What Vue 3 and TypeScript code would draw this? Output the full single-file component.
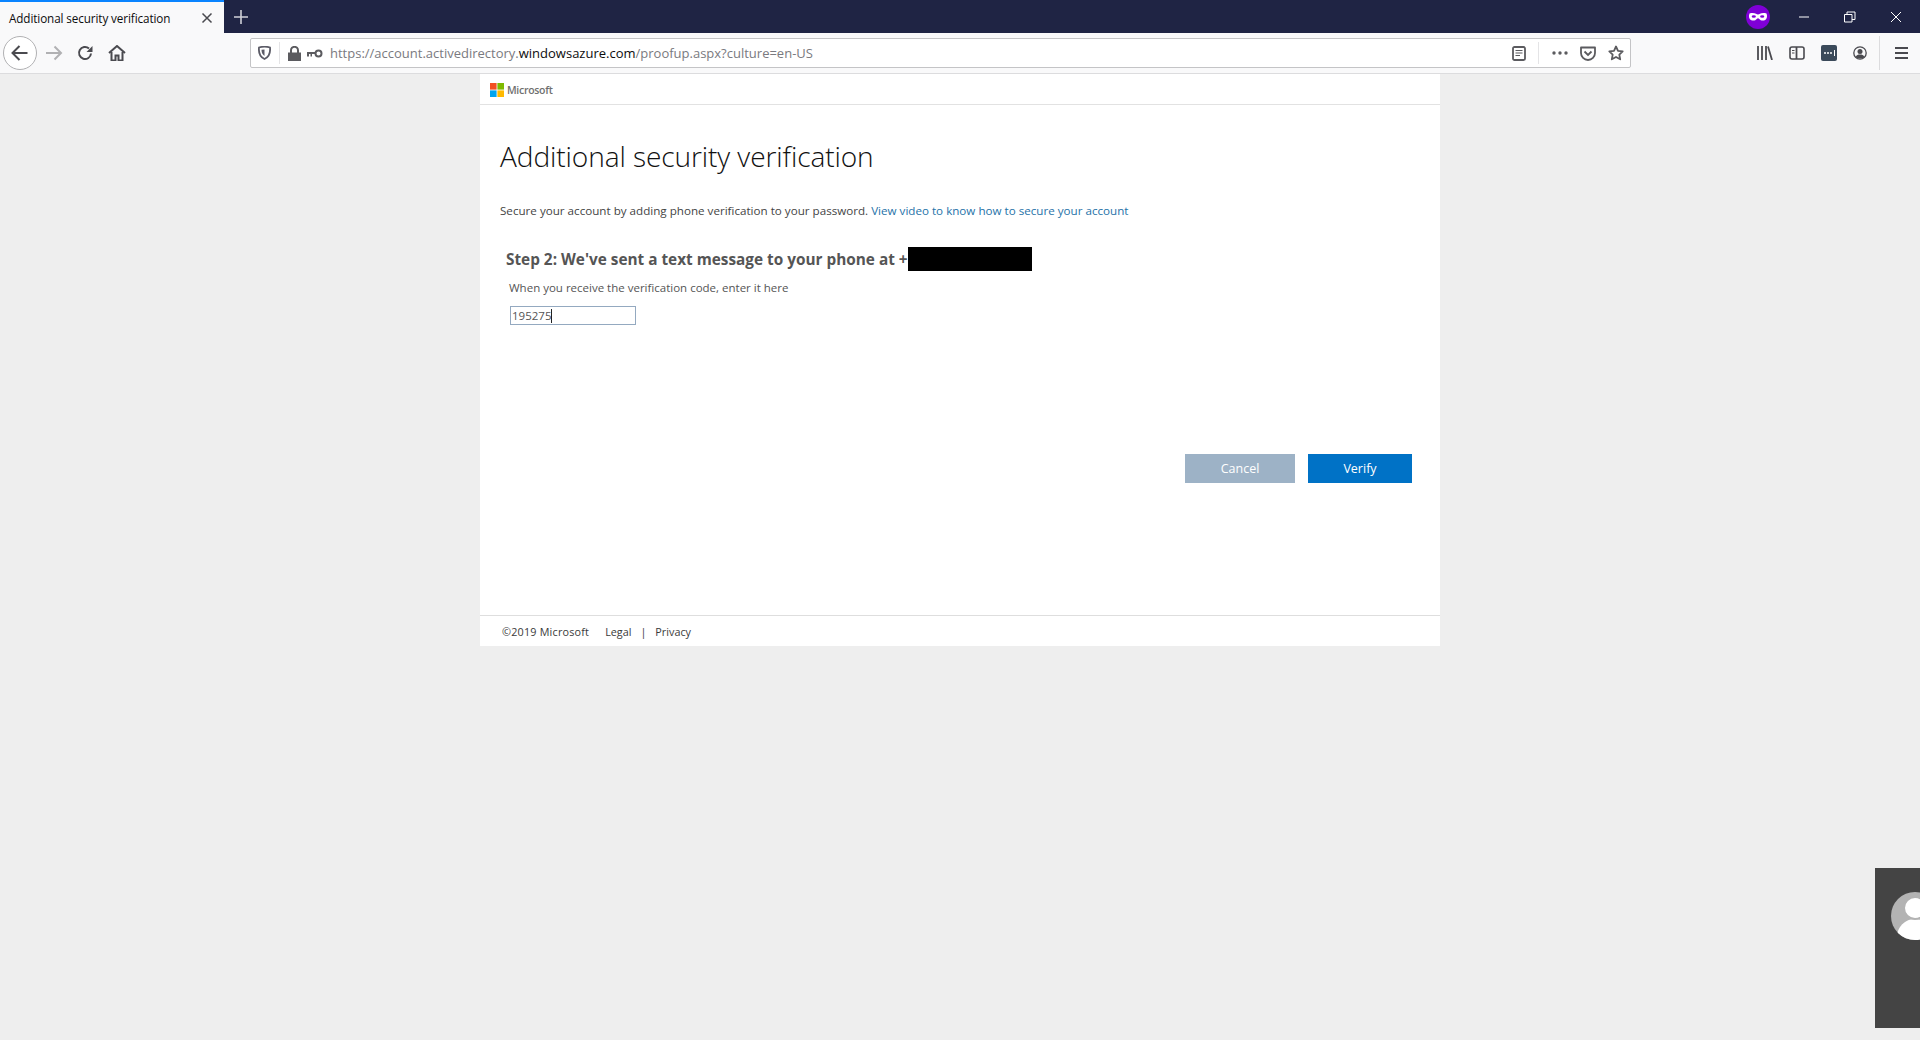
<script setup lang="ts">
const title: string = 'Additional security verification'
</script>

<template>
  <div class="browser">
    <div class="tabbar">
      <div class="tab">
        <span class="tab-title">{{ title }}</span>
        <svg class="tab-close" width="12" height="12" viewBox="0 0 12 12"><path d="M1.5 1.5l9 9M10.5 1.5l-9 9" stroke="#4a4a4f" stroke-width="1.5" fill="none"/></svg>
      </div>
      <svg class="newtab" width="14" height="14" viewBox="0 0 14 14"><path d="M7 0v14M0 7h14" stroke="#cfd0d8" stroke-width="1.6" fill="none"/></svg>
      <div class="spacer"></div>
      <svg class="mask" width="24" height="24" viewBox="0 0 24 24">
        <circle cx="12" cy="12" r="12" fill="#7f00d6"/>
        <path d="M3.500 8.500c2.500-.8 5-.6 6.500.3 1.300.8 2.700.8 4 0 1.500-.9 4-1.100 6.500-.3.700 1.800.800 4-.3 5.500-1.200 1.700-3.700 2-5.500 1.200-1.300-.6-1.800-1.900-2.700-1.900s-1.400 1.300-2.700 1.900C7.500 16 5 15.700 3.800 14 2.700 12.500 2.800 10.300 3.500 8.500z" fill="#fff"/>
        <ellipse cx="7.800" cy="11.500" rx="2.100" ry="1.200" fill="#7f00d6"/>
        <ellipse cx="16.200" cy="11.500" rx="2.100" ry="1.200" fill="#7f00d6"/>
      </svg>
      <div class="win-btns">
        <svg width="12" height="12" viewBox="0 0 12 12"><path d="M1 6h10" stroke="#fff" fill="none"/></svg>
        <svg width="12" height="12" viewBox="0 0 12 12"><path d="M.5 3.500h7.500v7.500H.5zM3 3.500V1h8v7.500H8" stroke="#fff" fill="none"/></svg>
        <svg width="12" height="12" viewBox="0 0 12 12"><path d="M1 1l10 10M11 1L1 11" stroke="#fff" fill="none"/></svg>
      </div>
    </div>

    <div class="toolbar">
      <button class="back" type="button">
        <svg width="18" height="18" viewBox="0 0 18 18"><path d="M1.500 9h15M8.500 2L1.500 9l7 7" stroke="#4a4a4f" stroke-width="2" fill="none"/></svg>
      </button>
      <svg class="forward" width="18" height="16" viewBox="0 0 18 16"><path d="M1 8h15M9.500 1.500L16 8l-6.500 6.500" stroke="#b1b1b3" stroke-width="2" fill="none"/></svg>
      <svg class="reload" width="16" height="16" viewBox="0 0 16 16"><path d="M14 8.500A6 6 0 1 1 12 3.500" stroke="#4a4a4f" stroke-width="2" fill="none"/><path d="M15.500 1v6h-6z" fill="#4a4a4f"/></svg>
      <svg class="home" width="18" height="16" viewBox="0 0 18 16"><path d="M1 8l8-7 8 7" stroke="#4a4a4f" stroke-width="2" fill="none"/><path d="M3.500 7v8.500h4v-5h3v5h4V7" stroke="#4a4a4f" stroke-width="2" fill="none"/></svg>

      <div class="urlbar">
        <svg class="shield" width="13" height="14" viewBox="0 0 13 14"><path d="M1 1.500c3.500-1 7.500-1 11 0 .5 5-1 9.500-5.500 11.500C2 11 .5 6.500 1 1.500z" stroke="#5b5b66" stroke-width="1.800" fill="none"/><path d="M6.500 3.500v6.500c-2-1.200-3-3.500-3-6.200z" fill="#5b5b66"/></svg>
        <span class="url-sep"></span>
        <svg class="lock" width="13" height="15" viewBox="0 0 13 15"><path d="M0 6.500h13V15H0z" fill="#5b5b5f"/><path d="M3 7V4.300a3.500 3.500 0 0 1 7 0V7" stroke="#5b5b5f" stroke-width="2" fill="none"/></svg>
        <svg class="key" width="16" height="9" viewBox="0 0 16 9"><circle cx="11.500" cy="4.500" r="3" stroke="#5b5b5f" stroke-width="2" fill="none"/><path d="M0 3h8v2H5v2.500H3.500V5H2v2.500H0z" fill="#5b5b5f"/></svg>
        <span class="url"><span class="dim">https://account.activedirectory.</span><span class="host">windowsazure.com</span><span class="dim">/proofup.aspx?culture=en-US</span></span>
        <div class="spacer"></div>
        <svg class="reader" width="14" height="15" viewBox="0 0 14 15"><rect x="1" y="1" width="12" height="13" rx="1.500" stroke="#5b5b5f" stroke-width="1.800" fill="none"/><path d="M3.500 4.500h7M3.500 7h7M3.500 9.500h4.500" stroke="#5b5b5f" stroke-width="1.200" fill="none"/></svg>
        <span class="url-sep sep2"></span>
        <svg class="dots" width="16" height="4" viewBox="0 0 16 4"><circle cx="2" cy="2" r="1.700" fill="#5b5b5f"/><circle cx="8" cy="2" r="1.700" fill="#5b5b5f"/><circle cx="14" cy="2" r="1.700" fill="#5b5b5f"/></svg>
        <svg class="pocket" width="16" height="15" viewBox="0 0 16 15"><path d="M1 1.500h14v5.500a7 7 0 0 1-14 0z" stroke="#5b5b5f" stroke-width="1.800" fill="none" stroke-linejoin="round"/><path d="M4.500 5.500L8 9l3.500-3.500" stroke="#5b5b5f" stroke-width="1.800" fill="none"/></svg>
        <svg class="star" width="16" height="16" viewBox="0 0 16 16"><path d="M8 1.500l2 4.300 4.700.6-3.400 3.200.9 4.700L8 12l-4.200 2.300.9-4.700L1.300 6.400 6 5.800z" stroke="#5b5b5f" stroke-width="1.800" fill="none" stroke-linejoin="round"/></svg>
      </div>

      <div class="spacer"></div>
      <div class="tool-icons">
        <svg width="16" height="14" viewBox="0 0 16 14"><path d="M1 0v14M5 0v14M9 0v14M11 .5l4 13.500" stroke="#4a4a4f" stroke-width="1.800" fill="none"/></svg>
        <svg width="16" height="14" viewBox="0 0 16 14"><rect x="1" y="1" width="14" height="12" rx="2" stroke="#4a4a4f" stroke-width="1.600" fill="none"/><path d="M7.500 1v12" stroke="#4a4a4f" stroke-width="1.800"/><path d="M3 4.500h2.500M3 7h2.500" stroke="#4a4a4f" stroke-width="1.200"/></svg>
        <span class="bw"><i></i><i></i><i></i><b></b></span>
        <svg width="14" height="14" viewBox="0 0 14 14"><circle cx="7" cy="7" r="6.200" stroke="#4a4a4f" stroke-width="1.300" fill="none"/><circle cx="7" cy="5.500" r="2.500" fill="#4a4a4f"/><path d="M2.500 11c1-2 2.500-2.500 4.500-2.500s3.500.5 4.500 2.500C10 13 4 13 2.500 11z" fill="#4a4a4f"/></svg>
      </div>
      <span class="tool-sep"></span>
      <svg class="menu" width="13" height="12" viewBox="0 0 13 12"><path d="M0 1h13M0 6h13M0 11h13" stroke="#4a4a4f" stroke-width="1.800" fill="none"/></svg>
    </div>

    <div class="viewport">
      <main class="page">
        <header class="brand">
          <svg width="14" height="14" viewBox="0 0 14 14"><rect width="6.600" height="6.600" fill="#f25022"/><rect x="7.400" width="6.600" height="6.600" fill="#7fba00"/><rect y="7.400" width="6.600" height="6.600" fill="#00a4ef"/><rect x="7.400" y="7.400" width="6.600" height="6.600" fill="#ffb900"/></svg>
          <span>Microsoft</span>
        </header>
        <section class="content">
          <h1>{{ title }}</h1>
          <p class="intro">Secure your account by adding phone verification to your password. <a href="#">View video to know how to secure your account</a></p>
          <div class="step">
            <h2>Step 2: We've sent a text message to your phone at +<span class="redact"></span></h2>
            <p class="hint">When you receive the verification code, enter it here</p>
            <div class="field">195275<span class="caret"></span></div>
          </div>
          <div class="actions">
            <button class="btn cancel" type="button">Cancel</button>
            <button class="btn verify" type="button">Verify</button>
          </div>
        </section>
        <footer class="foot">
          <span class="copy">©2019 Microsoft</span>
          <span>Legal</span>
          <span class="bar">|</span>
          <span>Privacy</span>
        </footer>
      </main>
      <aside class="widget">
        <svg width="45" height="48" viewBox="0 0 45 48">
          <defs><clipPath id="avatar-clip"><circle cx="40" cy="24" r="24"/></clipPath></defs>
          <g clip-path="url(#avatar-clip)">
            <rect width="45" height="48" fill="#b3b3b3"/>
            <ellipse cx="40" cy="45" rx="18" ry="18" fill="#fff"/>
            <circle cx="40" cy="16" r="11" fill="#fff" stroke="#b3b3b3" stroke-width="2"/>
          </g>
        </svg>
      </aside>
    </div>
  </div>
</template>

<style>
html, body { margin: 0; background: #eeeeee; }
</style>

<style scoped>
.browser { width: 1920px; height: 1040px; overflow: hidden; display: flex; flex-direction: column; font-family: "Open Sans", "Noto Sans", sans-serif; position: relative; }
.spacer { flex: 1; }

.tabbar { height: 33px; background: #1f2444; display: flex; align-items: center; flex: none; }
.tab { width: 224px; height: 33px; box-sizing: border-box; border-top: 2px solid #0a84ff; background: #f9f9fa; display: flex; align-items: center; padding: 0 11px 0 9px; justify-content: space-between; }
.tab-title { font-size: 11.700px; color: #0c0c0d; white-space: nowrap; letter-spacing: -0.1px; }
.newtab { margin-left: 10px; }
.mask { margin-right: 28px; }
.win-btns { display: flex; align-items: center; gap: 34px; margin-right: 18px; }

.toolbar { height: 41px; box-sizing: border-box; background: #f9f9fa; border-bottom: 1px solid #dcdcde; display: flex; align-items: center; padding-left: 3px; flex: none; }
.back { width: 34px; height: 34px; border-radius: 50%; border: 1px solid #b1b1b3; background: #fff; padding: 0; display: flex; align-items: center; justify-content: center; }
.forward { margin-left: 8px; }
.reload { margin-left: 14px; }
.home { margin-left: 15px; }

.urlbar { width: 1381px; height: 30px; box-sizing: border-box; margin-left: 124px; border: 1px solid #c4c4c6; border-radius: 2px; background: #fff; display: flex; align-items: center; padding-left: 7px; flex: none; }
.url-sep { width: 1px; height: 22px; background: #e4e4e6; margin: 0 8px 0 8px; }
.sep2 { margin: 0 13px 0 12px; }
.lock { margin-left: 0; }
.key { margin-left: 6px; }
.url { margin-left: 7px; font-size: 13px; white-space: nowrap; }
.dim { color: #7a7a80; }
.host { color: #0c0c0d; }
.dots { margin-right: 12px; }
.pocket { margin-right: 12px; }
.star { margin-right: 6px; }

.tool-icons { display: flex; align-items: center; gap: 16px; }
.bw { width: 16px; height: 16px; border-radius: 2px; background: #3b4a5a; display: flex; align-items: center; justify-content: center; gap: 1px; }
.bw i { width: 2px; height: 2px; border-radius: 50%; background: #fff; }
.bw b { width: 1px; height: 6px; background: #fff; margin-left: 1px; }
.tool-sep { width: 1px; height: 34px; background: #dcdcde; margin: 0 15px 0 12px; }
.menu { margin-right: 12px; }

.viewport { flex: 1; background: #eeeeee; display: flex; justify-content: center; align-items: flex-start; }
.page { width: 960px; height: 572px; background: #fff; display: flex; flex-direction: column; }
.brand { height: 31px; box-sizing: border-box; padding-top: 2px; border-bottom: 1px solid #e2e2e2; display: flex; align-items: center; gap: 3px; padding-left: 10px; font-size: 10.500px; color: #6f6f6f; flex: none; font-weight: 600; letter-spacing: -0.3px; }
.content { flex: 1; padding: 0 28px 0 20px; display: flex; flex-direction: column; }
h1 { margin: 32px 0 0; font-family: "Open Sans", sans-serif; font-weight: 300; font-size: 28.100px; line-height: 38px; color: #111; white-space: nowrap; letter-spacing: -0.1px; }
.intro { margin: 28px 0 0; font-size: 11.640px; line-height: 16px; color: #444; white-space: nowrap; }
.intro a { color: #2672a8; text-decoration: none; }
.step { padding-left: 6px; }
h2 { margin: 28px 0 0; height: 24px; font-size: 15.350px; line-height: 24px; font-weight: 700; color: #555; white-space: nowrap; display: flex; }
.redact { width: 124px; height: 24px; background: #000; margin-left: 0; }
.hint { margin: 9px 0 0 3px; font-size: 11.500px; line-height: 16px; color: #555; white-space: nowrap; }
.field { margin: 10px 0 0 4px; width: 126px; height: 19px; box-sizing: border-box; border: 1px solid #94a9c0; font-size: 11.500px; line-height: 17px; padding-left: 1px; color: #555; display: flex; align-items: center; }
.caret { width: 1px; height: 14px; background: #222; }
.actions { margin-top: 129px; display: flex; justify-content: flex-end; gap: 13px; }
.btn { height: 29px; border: none; padding: 0; color: #fff; font-family: inherit; font-size: 12.500px; }
.cancel { width: 110px; background: #9db2c6; }
.verify { width: 104px; background: #0072c6; }
.foot { height: 31px; box-sizing: border-box; border-top: 1px solid #dedede; display: flex; align-items: center; padding-left: 22px; font-size: 10.800px; color: #3a3a3a; flex: none; }
.copy { margin-right: 16px; letter-spacing: 0.2px; }
.bar { margin: 0 9px; }

.widget { position: absolute; left: 1875px; top: 868px; width: 45px; height: 160px; background: #444; display: flex; align-items: flex-start; padding-top: 24px; box-sizing: border-box; }
</style>
